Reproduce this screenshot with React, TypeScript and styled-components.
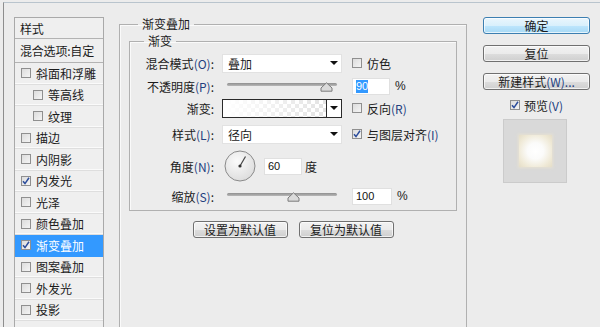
import React from 'react';
import styled, { createGlobalStyle } from 'styled-components';

const GlobalStyle = createGlobalStyle`
  html, body {
    margin: 0;
    padding: 0;
    background: #ececec;
  }
  body {
    font-family: "Noto Sans CJK SC", "Liberation Sans", sans-serif;
    font-size: 12px;
    color: #1b1b1b;
  }
`;

const Window = styled.div`
  width: 597px;
  height: 325px;
  margin: 2px 0 0 3px;
  border-top: 1px solid #b9c4cd;
  border-left: 1px solid #8e8e8e;
  background: #ececec;
  display: flex;
  align-items: flex-start;
  overflow: hidden;
  box-sizing: border-box;
`;

/* ---------- left style list ---------- */

const StyleList = styled.ul`
  list-style: none;
  margin: 14px 0 0 10px;
  padding: 0;
  width: 90px;
  height: 340px;
  border: 1px solid #a9a9a9;
  background: #efefef;
  box-sizing: border-box;
  flex: none;
`;

const ListHeader = styled.li<{ $h: number }>`
  height: ${p => p.$h}px;
  display: flex;
  align-items: center;
  padding-left: 5px;
  border-bottom: 1px solid #b3b3b3;
  box-sizing: border-box;
  white-space: nowrap;
  letter-spacing: -0.2px;
`;

const ListRow = styled.li<{ $indent?: boolean; $selected?: boolean }>`
  height: 21.5px;
  display: flex;
  align-items: center;
  gap: 5px;
  padding-left: ${p => (p.$indent ? 18 : 6)}px;
  border-bottom: 1px solid ${p => (p.$selected ? '#3399ff' : '#dedede')};
  box-shadow: ${p => (p.$selected ? 'none' : 'inset 0 -1px 0 #fafafa')};
  background: ${p => (p.$selected ? '#3399ff' : 'transparent')};
  color: ${p => (p.$selected ? '#fff' : '#1b1b1b')};
  box-sizing: border-box;
  white-space: nowrap;
`;

const Box = styled.span`
  width: 10px;
  height: 10px;
  flex: none;
  display: inline-flex;
  align-items: center;
  justify-content: center;
  border: 1px solid #8f8f8f;
  background: linear-gradient(135deg, #dcdcdc 0%, #f4f4f4 100%);
  box-sizing: border-box;
`;

function CheckBox({ checked }: { checked?: boolean }) {
  return (
    <Box>
      {checked && (
        <svg width='8' height='8' viewBox='0 0 8 8'>
          <path d='M1 4.2 L3 6.6 L7 0.8' fill='none' stroke='#2b4c9b' strokeWidth='1.5' />
        </svg>
      )}
    </Box>
  );
}

const listItems: { label: string; checked?: boolean; indent?: boolean; selected?: boolean }[] = [
  { label: '斜面和浮雕' },
  { label: '等高线', indent: true },
  { label: '纹理', indent: true },
  { label: '描边' },
  { label: '内阴影' },
  { label: '内发光', checked: true },
  { label: '光泽' },
  { label: '颜色叠加' },
  { label: '渐变叠加', checked: true, selected: true },
  { label: '图案叠加' },
  { label: '外发光' },
  { label: '投影' }
];

/* ---------- center panel ---------- */

const GroupBox = styled.fieldset`
  margin: 0;
  border: 1px solid #b0b0b0;
  box-shadow: 1px 1px 0 #fafafa inset;
  padding: 0;
  box-sizing: border-box;
`;

const OuterGroup = styled(GroupBox)`
  margin: 13px 0 0 15px;
  width: 348px;
  height: 340px;
  flex: none;
  padding: 0 9px;
`;

const InnerGroup = styled(GroupBox)`
  margin-top: 1px;
  height: 178px;
`;

const Legend = styled.legend<{ $offset: number }>`
  margin-left: ${p => p.$offset}px;
  padding: 0 4px;
  line-height: 16px;
`;

const Form = styled.div`
  display: grid;
  grid-template-columns: 84px 120px auto;
  column-gap: 8px;
  padding-top: 4px;
`;

const Label = styled.div<{ $top: number; $h?: number }>`
  grid-column: 1;
  margin-top: ${p => p.$top}px;
  height: ${p => p.$h ?? 20}px;
  display: flex;
  align-items: center;
  justify-content: flex-end;
  white-space: nowrap;
`;

const Accel = styled.span`
  color: #23407f;
`;

const Cell = styled.div<{ $top: number; $h?: number }>`
  margin-top: ${p => p.$top}px;
  height: ${p => p.$h ?? 20}px;
  display: flex;
  align-items: center;
  white-space: nowrap;
`;

const Side = styled(Cell)`
  padding-left: 2px;
  gap: 5px;
`;

const Select = styled.div`
  width: 120px;
  height: 19px;
  background: #fff;
  border: 1px solid #e2e2e2;
  box-sizing: border-box;
  display: flex;
  align-items: center;
  justify-content: space-between;
  padding: 0 3px 0 5px;
`;

const Arrow = styled.span`
  width: 0;
  height: 0;
  border-left: 4px solid transparent;
  border-right: 4px solid transparent;
  border-top: 4px solid #111;
`;

const GradientField = styled.div`
  width: 120px;
  height: 19px;
  border: 1px solid #2a2a2a;
  box-sizing: border-box;
  display: flex;
  background: #fff;
`;

const GradientSwatch = styled.div`
  flex: 1;
  background-color: #fff;
  background-image:
    linear-gradient(to right, #fff 0%, rgba(255, 255, 255, 0.2) 100%),
    linear-gradient(45deg, #dcdcdc 25%, transparent 25%, transparent 75%, #dcdcdc 75%),
    linear-gradient(45deg, #dcdcdc 25%, transparent 25%, transparent 75%, #dcdcdc 75%);
  background-size: 100% 100%, 8px 8px, 8px 8px;
  background-position: 0 0, 0 0, 4px 4px;
  border-right: 1px solid #2a2a2a;
`;

const GradientArrow = styled.div`
  width: 14px;
  display: flex;
  align-items: center;
  justify-content: center;
`;

const SliderWrap = styled.div`
  position: relative;
  width: 110px;
  height: 20px;
  margin-left: 5px;
`;

const Track = styled.div`
  position: absolute;
  left: 0;
  right: 0;
  top: 7px;
  height: 3px;
  border-radius: 2px;
  background: linear-gradient(#8f8f8f, #b8b8b8);
`;

const Thumb = styled.svg`
  position: absolute;
  top: 6px;
  margin-left: -6px;
`;

function Slider({ value }: { value: number }) {
  return (
    <SliderWrap>
      <Track />
      <Thumb width='13' height='10' viewBox='0 0 13 10' style={{ left: `${value}%` }}>
        <path d='M6.5 0.8 L12 6 L12 9.2 L1 9.2 L1 6 Z' fill='#dadada' stroke='#7b7b7b' />
      </Thumb>
    </SliderWrap>
  );
}

const NumberInput = styled.div<{ $selected?: boolean; $w?: number }>`
  width: ${p => p.$w ?? 39}px;
  height: 17px;
  background: #fff;
  border: 1px solid #e0e0e0;
  box-sizing: border-box;
  display: flex;
  align-items: center;
  padding-left: 3px;
  font-family: "Liberation Sans", sans-serif;
  font-size: 11px;

  span {
    background: ${p => (p.$selected ? '#3399ff' : 'transparent')};
    color: ${p => (p.$selected ? '#fff' : '#111')};
    line-height: 13px;
  }
`;

const Unit = styled.span`
  font-family: "Liberation Sans", sans-serif;
  font-size: 12px;
`;

const AngleRow = styled(Cell)`
  grid-column: 2 / 4;
  gap: 8px;
`;

const DegreeText = styled.span`
  margin-left: -5px;
`;

function Dial({ angle }: { angle: number }) {
  const r = (angle * Math.PI) / 180;
  const x = 16 + Math.cos(r) * 11;
  const y = 16 - Math.sin(r) * 11;
  return (
    <svg width='32' height='32' viewBox='0 0 32 32' style={{ marginLeft: 2 }}>
      <defs>
        <radialGradient id='dialFill' cx='40%' cy='35%' r='70%'>
          <stop offset='0%' stopColor='#fbfbfb' />
          <stop offset='100%' stopColor='#dcdcdc' />
        </radialGradient>
      </defs>
      <circle cx='16' cy='16' r='15' fill='url(#dialFill)' stroke='#8a8a8a' />
      <line x1='16' y1='16' x2={x} y2={y} stroke='#444' strokeWidth='1.2' />
      <circle cx='16' cy='16' r='1.6' fill='#333' />
    </svg>
  );
}

const ButtonRow = styled.div`
  display: flex;
  justify-content: center;
  gap: 11px;
  margin-top: 10px;
`;

const Button = styled.div<{ $w?: number; $primary?: boolean }>`
  width: ${p => p.$w ?? 95}px;
  height: 17px;
  box-sizing: border-box;
  border: 1px solid ${p => (p.$primary ? '#3c7fb1' : '#707070')};
  border-radius: 3px;
  background: ${p =>
    p.$primary
      ? 'linear-gradient(#eaf6fd 0%, #d9f0fc 50%, #bee6fd 51%, #a7d9f5 100%)'
      : 'linear-gradient(#f2f2f2 0%, #ebebeb 50%, #dddddd 51%, #cfcfcf 100%)'};
  box-shadow: inset 0 0 0 1px rgba(255, 255, 255, 0.7);
  display: flex;
  align-items: center;
  justify-content: center;
  white-space: nowrap;
  line-height: 1;
`;

/* ---------- right column ---------- */

const RightColumn = styled.div`
  margin: 14px 0 0 16px;
  width: 107px;
  display: flex;
  flex-direction: column;
  align-items: stretch;
  gap: 11px;
  flex: none;
`;

const PreviewToggle = styled.div`
  height: 12px;
  display: flex;
  align-items: center;
  justify-content: center;
  gap: 4px;
  margin-top: -2px;
`;

const PreviewBox = styled.div`
  width: 64px;
  height: 64px;
  margin: -3px 0 0 20px;
  background: #d9d9d9;
  border: 1px solid #cbcbcb;
  box-sizing: border-box;
  display: flex;
  align-items: center;
  justify-content: center;
`;

const Glow = styled.div`
  width: 33px;
  height: 32px;
  background: radial-gradient(circle at 50% 50%, #ffffff 0%, #fbfbfa 35%, #efe9d6 75%, #e4ddc8 100%);
  box-shadow: 0 0 3px 1px rgba(240, 232, 205, 0.6);
`;

export default function App() {
  return (
    <>
      <GlobalStyle />
      <Window>
        <StyleList>
          <ListHeader $h={21}>样式</ListHeader>
          <ListHeader $h={24}>混合选项:自定</ListHeader>
          {listItems.map(item => (
            <ListRow key={item.label} $indent={item.indent} $selected={item.selected}>
              <CheckBox checked={item.checked} />
              <span>{item.label}</span>
            </ListRow>
          ))}
        </StyleList>

        <OuterGroup>
          <Legend $offset={9}>渐变叠加</Legend>
          <InnerGroup>
            <Legend $offset={14}>渐变</Legend>
            <Form>
              <Label $top={0}>
                混合模式<Accel>(O)</Accel>:
              </Label>
              <Cell $top={0}>
                <Select>
                  <span>叠加</span>
                  <Arrow />
                </Select>
              </Cell>
              <Side $top={0}>
                <CheckBox />
                <span>仿色</span>
              </Side>

              <Label $top={3}>
                不透明度<Accel>(P)</Accel>:
              </Label>
              <Cell $top={3}>
                <Slider value={90} />
              </Cell>
              <Side $top={3}>
                <NumberInput $selected $w={38}>
                  <span>90</span>
                </NumberInput>
                <Unit>%</Unit>
              </Side>

              <Label $top={2}>渐变:</Label>
              <Cell $top={2}>
                <GradientField>
                  <GradientSwatch />
                  <GradientArrow>
                    <Arrow />
                  </GradientArrow>
                </GradientField>
              </Cell>
              <Side $top={2}>
                <CheckBox />
                <span>
                  反向<Accel>(R)</Accel>
                </span>
              </Side>

              <Label $top={6}>
                样式<Accel>(L)</Accel>:
              </Label>
              <Cell $top={6}>
                <Select>
                  <span>径向</span>
                  <Arrow />
                </Select>
              </Cell>
              <Side $top={6}>
                <CheckBox checked />
                <span>
                  与图层对齐<Accel>(I)</Accel>
                </span>
              </Side>

              <Label $top={6} $h={32}>
                角度<Accel>(N)</Accel>:
              </Label>
              <AngleRow $top={6} $h={32}>
                <Dial angle={60} />
                <NumberInput $w={38}>
                  <span>60</span>
                </NumberInput>
                <DegreeText>度</DegreeText>
              </AngleRow>

              <Label $top={4}>
                缩放<Accel>(S)</Accel>:
              </Label>
              <Cell $top={4}>
                <Slider value={60} />
              </Cell>
              <Side $top={4}>
                <NumberInput $w={40}>
                  <span>100</span>
                </NumberInput>
                <Unit>%</Unit>
              </Side>
            </Form>
          </InnerGroup>
          <ButtonRow>
            <Button>设置为默认值</Button>
            <Button>复位为默认值</Button>
          </ButtonRow>
        </OuterGroup>

        <RightColumn>
          <Button $primary $w={107}>确定</Button>
          <Button $w={107}>复位</Button>
          <Button $w={107}>
            新建样式<Accel>(W)...</Accel>
          </Button>
          <PreviewToggle>
            <CheckBox checked />
            <span>
              预览<Accel>(V)</Accel>
            </span>
          </PreviewToggle>
          <PreviewBox>
            <Glow />
          </PreviewBox>
        </RightColumn>
      </Window>
    </>
  );
}
